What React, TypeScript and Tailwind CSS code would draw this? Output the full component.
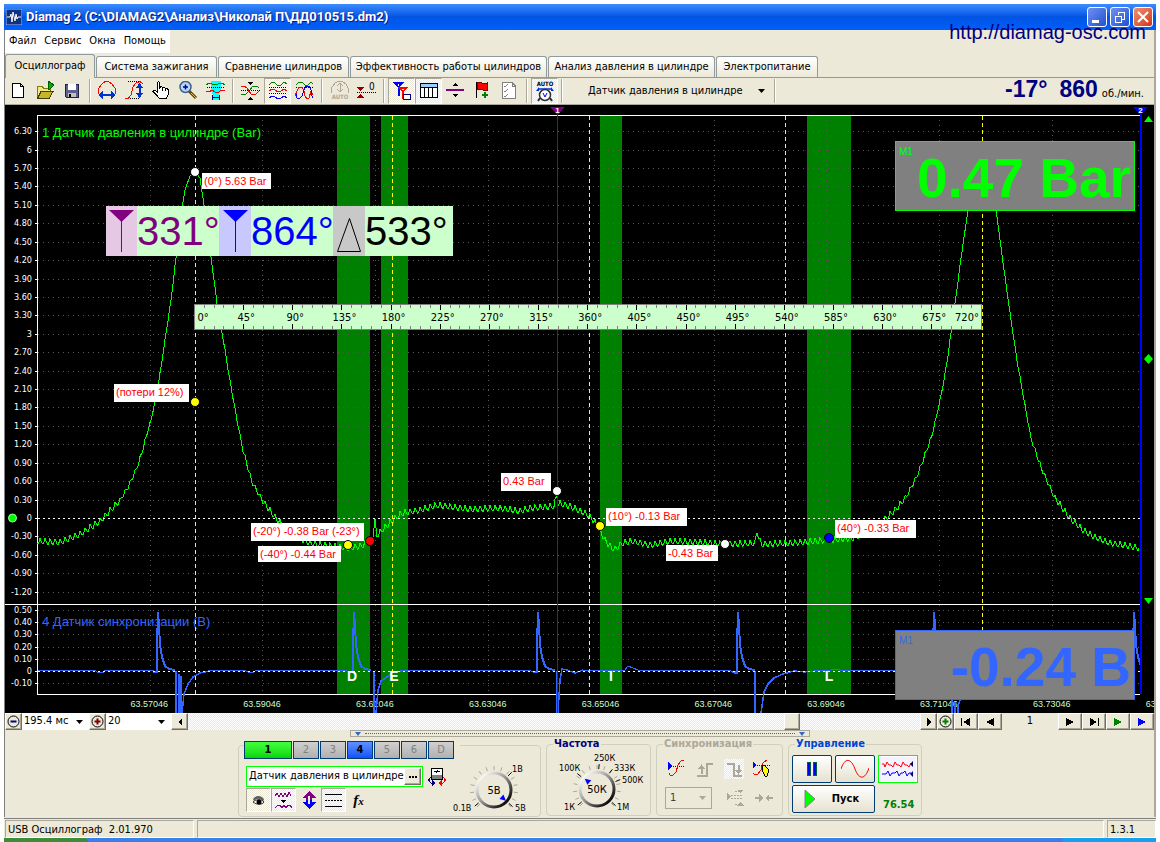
import type { ReactNode } from "react"

// ---------- small shared pieces ----------

const checker = "bg-[conic-gradient(#fff_25%,#ece9d8_0_50%,#fff_0_75%,#ece9d8_0)] bg-[length:2px_2px]"
const raised = "border border-t-white border-l-white border-r-[#716f64] border-b-[#716f64] bg-[#ece9d8] shadow-[inset_-1px_-1px_#aca899]"

function Icon({ children, size = 20 }: { children: ReactNode; size?: number }) {
  return (
    <svg width={size} height={size} viewBox={`0 0 ${size} ${size}`} fill="none" shapeRendering="crispEdges" aria-hidden="true" className="shrink-0">
      {children}
    </svg>
  )
}

function ToolButton({ label, pressed, children }: { label: string; pressed?: boolean; children: ReactNode }) {
  return (
    <button
      aria-label={label}
      className={`flex h-[26px] w-[27px] items-center justify-center border ${
        pressed ? `${checker} border-t-[#aca899] border-l-[#aca899] border-r-white border-b-white` : "border-transparent"
      }`}
    >
      {children}
    </button>
  )
}

function Sep() {
  return (
    <div className="flex w-2 justify-center self-stretch py-px">
      <div className="w-[2px] border-l border-[#aca899] bg-white"></div>
    </div>
  )
}

function Arrow() {
  return (
    <svg width="7" height="4" viewBox="0 0 7 4" aria-hidden="true" className="pointer-events-none absolute right-1.5 top-1/2 -mt-[2px]">
      <path d="M0 0H7L3.5 4Z" fill="currentColor" />
    </svg>
  )
}

// ---------- chart data ----------

const pressure: [number, number][] = [
  [37, 541], [60, 542], [80, 534], [100, 521], [120, 500], [128, 487], [134, 474], [139, 462], [145, 441], [151, 420],
  [158, 387], [165, 340], [171, 300], [176, 258], [181, 215], [185, 190], [190, 176], [195, 172], [200, 178], [204, 205],
  [211, 257], [217, 303], [222, 332], [229, 375], [237, 420], [243, 450], [252, 482], [263, 501], [275, 517], [282, 524],
  [296, 536], [310, 543], [348, 548], [360, 546], [370, 541], [373, 534], [375, 522], [377, 535], [386, 526], [395, 518],
  [402, 513], [420, 510], [437, 505], [470, 509], [500, 508], [520, 511], [530, 508], [554, 506], [556, 498], [557, 491],
  [558, 503], [570, 506], [585, 513], [592, 518], [600, 530], [605, 540], [612, 548], [615, 549], [622, 543], [632, 541],
  [650, 545], [670, 541], [700, 542], [725, 544], [755, 543], [757, 531], [760, 541], [762, 544], [790, 543], [828, 540],
  [852, 538], [870, 531], [886, 518], [898, 507], [907, 495], [917, 476], [923, 460], [932, 435], [936, 418], [940, 400],
  [944, 380], [948, 355], [955, 304], [961, 258], [968, 210], [976, 178], [982, 170], [989, 178], [996, 210], [1003, 262],
  [1010, 313], [1017, 360], [1024, 400], [1031, 438], [1041, 467], [1054, 496], [1069, 517], [1082, 529], [1095, 537],
  [1110, 543], [1125, 545], [1140, 548],
]

// base line of the trace with the sawtooth ripple laid on the slow parts
function pressurePath() {
  const out: string[] = []
  for (let i = 0; i < pressure.length - 1; i++) {
    const [x0, y0] = pressure[i]
    const [x1, y1] = pressure[i + 1]
    for (let x = x0; x < x1; x++) {
      const y = y0 + ((y1 - y0) * (x - x0)) / (x1 - x0)
      const amp = y > 500 ? 3 : y > 440 ? 2 : y > 250 ? 1 : 0
      const tooth = [-1, -0.2, 0.6, 1, 0.2][x % 5] * amp
      out.push(`${x} ${(y + tooth).toFixed(1)}`)
    }
  }
  return "M" + out.join("L")
}

const spikes = [157, 353, 537, 737, 933, 1133]

function spikePath(x: number) {
  return `M${x - 4} 672H${x}V645L${x + 1} 612L${x + 2} 625L${x + 3} 645L${x + 5} 657L${x + 8} 666L${x + 12} 669L${x + 18} 670`
}

const dips = [
  "M176 671V713M179 713V675H180M181 713V676M182 713L184 694L188 684L193 677L200 673L209 671",
  "M374 671V713M376 713L378 690L381 681L387 677L394 672L402 671",
  "M557 671V713M558 713L560 680L562 669L567 670L575 673L583 670",
  "M755 671V713M761 713L764 692L768 684L774 678L783 674L794 671L806 672",
  "M952 700V713M955 713V702M958 713V706L960 700",
]

const yTop = Array.from({ length: 26 }, (_, i) => 6.3 - i * 0.3)
const yLow = [0.5, 0.4, 0.3, 0.2, 0.1, 0, -0.1]
const xTicks = Array.from({ length: 10 }, (_, i) => ({ x: 150.5 + i * 112.8, t: (63.57046 + i * 0.02).toFixed(5) }))
const bands = [[337, 33], [381, 27], [600, 22], [807, 44]]

const notes = [
  { x: 202, y: 173, w: 69, h: 16, t: "(0°) 5.63 Bar" },
  { x: 114, y: 384, w: 75, h: 18, t: "(потери 12%)" },
  { x: 251, y: 523, w: 113, h: 18, t: "(-20°) -0.38 Bar (-23°)" },
  { x: 258, y: 546, w: 83, h: 16, t: "(-40°) -0.44 Bar" },
  { x: 501, y: 473, w: 50, h: 18, t: "0.43 Bar" },
  { x: 606, y: 508, w: 81, h: 18, t: "(10°) -0.13 Bar" },
  { x: 666, y: 545, w: 52, h: 16, t: "-0.43 Bar" },
  { x: 835, y: 520, w: 81, h: 18, t: "(40°) -0.33 Bar" },
]

const dots = [
  [195, 172, "#fff"], [195, 402, "#ff0"], [348, 545, "#ff0"], [370, 541, "#f00"], [557, 491, "#fff"],
  [600, 526, "#ff0"], [725, 544, "#fff"], [829, 538, "#00f"],
] as [number, number, string][]

function fmt(v: number) {
  const r = Math.round(v * 100) / 100
  return Math.abs(r % 3) < 0.001 ? String(Math.abs(r)) : r.toFixed(2)
}

function Chart() {
  return (
    <svg viewBox="5 105 1149 608" className="block h-auto w-full bg-black font-['Liberation_Sans',sans-serif]" role="img" aria-label="Осциллограмма">
      <defs>
        <clipPath id="plot">
          <rect x="37" y="115" width="1103" height="598" />
        </clipPath>
      </defs>

      {/* green phase bands */}
      {bands.map(([x, w]) => (
        <rect key={x} x={x} y="116" width={w} height="578" fill="#008000" />
      ))}

      {/* dotted grid */}
      <g stroke="#585858" strokeDasharray="1 4" shapeRendering="crispEdges">
        {yTop.map((v) => (
          <path key={v} d={`M38 ${Math.round(518 - v * 61.4) + 0.5}H1140`} />
        ))}
        {yLow.map((v) => (
          <path key={v} d={`M38 ${Math.round(671 - v * 122) + 0.5}H1140`} />
        ))}
        {xTicks.slice(0, 9).map((k) => (
          <path key={k.t} d={`M${Math.round(k.x) - 0.5} 120V694`} />
        ))}
      </g>

      {/* axis numbers */}
      <g fill="#fff" fontSize="9" textAnchor="end" className="font-['DejaVu_Sans_Condensed','DejaVu_Sans',sans-serif]">
        {yTop.map((v) => (
          <text key={v} x="32" y={Math.round(518 - v * 61.4) + 3}>{fmt(v)}</text>
        ))}
        {yLow.map((v) => (
          <text key={v} x="32" y={Math.round(671 - v * 122) + 3}>{fmt(v)}</text>
        ))}
      </g>
      <g stroke="#fff" shapeRendering="crispEdges">
        {yTop.map((v) => (
          <path key={v} d={`M35 ${Math.round(518 - v * 61.4) + 0.5}H38`} />
        ))}
        {yLow.map((v) => (
          <path key={v} d={`M35 ${Math.round(671 - v * 122) + 0.5}H38`} />
        ))}
        <path d="M37.5 115V694.5H1140M37 115.5H1140M5 604.5H1140" fill="none" />
      </g>
      <g fill="#ccffcc" fontSize="9">
        {xTicks.map((k) => (
          <text key={k.t} x={k.x - 20} y="707">{k.t}</text>
        ))}
      </g>

      <g fontSize="13">
        <text x="42" y="137" fill="#00ff00">1 Датчик давления в цилиндре (Bar)</text>
        <text x="42" y="626" fill="#3366ff">4 Датчик синхронизации (В)</text>
      </g>

      {/* traces */}
      <g clipPath="url(#plot)" fill="none" shapeRendering="crispEdges">
        <path d={pressurePath()} stroke="#00ff00" />
        <g stroke="#3366ff">
          <path d="M38 670.5H95l3 2h5l2-2H154M209 670.5H245l4 2h4l3-2H346l4 2h4M402 670.5H530l4 2h4M583 670H625l3-4 5 2 5 2H730l4 3h4M806 672l8-1 5-1h12l3-1 6 1H896" />
          {spikes.map((x) => (
            <path key={x} d={spikePath(x)} strokeWidth="2" />
          ))}
          {dips.map((d) => (
            <path key={d} d={d} strokeWidth="1.5" />
          ))}
        </g>
      </g>
      <path d="M38 518.5H1140M38 671.5H1140" stroke="#fff" strokeDasharray="2 3" shapeRendering="crispEdges" />

      {/* dead-centre markers and cursors */}
      <g stroke="#ffff00" strokeDasharray="4 3" shapeRendering="crispEdges">
        {[195, 392, 589, 785, 982].map((x) => (
          <path key={x} d={`M${x + 0.5} 116V694`} />
        ))}
      </g>
      <path d="M557.5 113V713" stroke="#800080" shapeRendering="crispEdges" />
      <path d="M1140.5 113V694" stroke="#0000ff" strokeWidth="2" shapeRendering="crispEdges" />
      <path d="M550 107H565L557.5 115Z" fill="#800080" />
      <path d="M1133 107H1148L1140.5 115Z" fill="#0000ff" />
      <g fill="#fff" fontSize="8" fontWeight="bold" textAnchor="middle">
        <text x="557.5" y="113">1</text>
        <text x="1140.5" y="113">2</text>
        <g fontSize="14">
          <text x="352" y="681">D</text>
          <text x="394" y="681">E</text>
          <text x="611" y="681">I</text>
          <text x="829" y="681">L</text>
        </g>
      </g>

      {/* level handles */}
      <g fill="#00ff00">
        <circle cx="12.5" cy="518" r="4" stroke="#a0ffa0" />
        <path d="M1148.5 116L1153 122H1144ZM1148.5 354L1153 359L1148.5 364L1144 359ZM1144 598H1153L1148.5 604Z" />
      </g>

      {/* crank angle ruler */}
      <rect x="194.5" y="304.5" width="787" height="25" fill="#ccffcc" stroke="#808080" />
      {Array.from({ length: 79 }, (_, i) => i + 1).map((i) => {
        const x = Math.round(195 + i * 9.83) - 0.5
        const n = i % 5 ? 3 : 5
        return <path key={i} d={`M${x} 305v${n}M${x} 329v${-n}`} stroke={i % 5 ? "#808080" : "#000"} shapeRendering="crispEdges" />
      })}
      <g fill="#000" fontSize="11" textAnchor="middle" className="font-['DejaVu_Sans_Condensed','DejaVu_Sans',sans-serif]">
        {Array.from({ length: 17 }, (_, i) => (
          <text key={i} x={i === 0 ? 203 : i === 16 ? 967 : 197 + i * 49.15} y="321">{i * 45}°</text>
        ))}
      </g>

      {/* notes with their points */}
      {notes.map((n) => (
        <g key={n.t}>
          <rect x={n.x} y={n.y} width={n.w} height={n.h} fill="#fff" />
          <text x={n.x + 2} y={n.y + 12} fill="#ff0000" fontSize="11">{n.t}</text>
        </g>
      ))}
      {dots.map(([x, y, c]) => (
        <circle key={`${x}-${y}`} cx={x} cy={y} r="4.5" fill={c} stroke="#000" />
      ))}
    </svg>
  )
}

// big angle numbers over the chart
function AngleReadout() {
  return (
    <div className="absolute left-[101px] top-[101px] flex h-[50px] bg-[#ccffcc] font-['Liberation_Sans',sans-serif] text-[40px] leading-[50px]">
      <div className="flex w-[31px] items-center bg-[#e4c8e4]">
        <svg width="31" height="50" viewBox="0 0 31 50" aria-hidden="true">
          <path d="M3 4H28L15.5 16Z" fill="#800080" />
          <path d="M15.5 14V46" stroke="#800080" />
        </svg>
      </div>
      <div className="w-[82px] text-[#800080]">331°</div>
      <div className="flex w-8 items-center bg-[#c8c8ff]">
        <svg width="32" height="50" viewBox="0 0 32 50" aria-hidden="true">
          <path d="M4 4H29L16.5 16Z" fill="#0000ff" />
          <path d="M16.5 14V46" stroke="#0000ff" />
        </svg>
      </div>
      <div className="w-[82px] text-[#0000ff]">864°</div>
      <div className="flex w-8 items-center bg-[#c8c8c8]">
        <svg width="32" height="50" viewBox="0 0 32 50" fill="none" aria-hidden="true">
          <path d="M16.5 12.5L4.5 45.5H27.5Z" stroke="#000" />
        </svg>
      </div>
      <div className="w-[88px] text-black">533°</div>
    </div>
  )
}

function Toolbar() {
  return (
    <div className="flex h-7 items-center border-t border-b border-t-[#919b9c] border-b-[#aca899]">
      <ToolButton label="Новый">
        <Icon><path d="M3.5 2.5H11.5L14.5 5.5V16.5H3.5ZM11.5 2.5V5.5H14.5" fill="#fff" stroke="#000" /></Icon>
      </ToolButton>
      <ToolButton label="Открыть">
        <Icon>
          <path d="M1.5 17.5V5.5H6L8 7.5H14.5V10" fill="#f0e68c" stroke="#808000" />
          <path d="M1.5 17.5L5 10.5H17L13 17.5Z" fill="#c8b428" stroke="#404000" />
          <path d="M12 0L18 4L13 9Z" fill="#00b000" stroke="#006000" />
        </Icon>
      </ToolButton>
      <ToolButton label="Сохранить">
        <Icon>
          <path d="M2 3H15V16H3L2 15Z" fill="#606090" stroke="#202040" />
          <path d="M5 3H13V9H5Z" fill="#fff" />
          <path d="M5 12H13V16H5Z" fill="#c0c0c0" />
          <path d="M6 13H8V16H6Z" fill="#000" />
        </Icon>
      </ToolButton>
      <Sep />
      <ToolButton label="Период">
        <Icon>
          <path d="M.5 13V8L3 4L7 .5H10L14 3L17.5 8V13" stroke="#f00" />
          <path d="M2 14H16" stroke="#0033cc" strokeWidth="2" />
          <path d="M5 10L0 14L5 18ZM13 10L18 14L13 18Z" fill="#0033cc" />
        </Icon>
      </ToolButton>
      <ToolButton label="Амплитуда">
        <Icon>
          <path d="M3 .5H16M3 17.5H14" stroke="#000" strokeDasharray="1 1" />
          <path d="M0 17.5H3L6 14L8 6L11 2L15 .5L18 3" stroke="#f00" />
          <path d="M14.5 4V14" stroke="#0033cc" strokeWidth="2" />
          <path d="M11 7L14.5 2L18 7ZM11 12L14.5 17L18 12Z" fill="#0033cc" />
        </Icon>
      </ToolButton>
      <ToolButton label="Перемещение">
        <Icon>
          <path d="M5.5 10V1.5L6.5 .5L7.5 1.5V7L9 5.5L10.5 6.5L12 6L13.5 7.5L15 7L16.5 9V13L14.5 17.5H7.5L4 13.5L1 10.5L2 9L5.5 11Z" fill="#fff" stroke="#000" />
          <path d="M10.5 7V10M13.5 8V10" stroke="#000" />
        </Icon>
      </ToolButton>
      <ToolButton label="Масштаб">
        <svg width="20" height="20" viewBox="0 0 20 20" fill="none" aria-hidden="true">
          <path d="M10 10L17 17" stroke="#604800" strokeWidth="3" />
          <path d="M12 12L17 17" stroke="#e0b060" />
          <circle cx="6.5" cy="6" r="5.5" fill="#b8d8ff" stroke="#406090" strokeWidth="1.5" />
          <path d="M4 6H9M6.5 3.5V8.5" stroke="#000080" strokeWidth="1.5" />
        </svg>
      </ToolButton>
      <ToolButton label="Фрагмент">
        <Icon>
          <path d="M5 0H15V10L13 14V19H7V14L5 10Z" fill="#00ffff" />
          <path d="M0 4L3 2L6 3L9 4L12 3L16 2L19 4" stroke="#008000" />
          <path d="M1 6.5H19" stroke="#000" strokeDasharray="1 1" />
          <path d="M0 10L3 11L6 9L9 11L12 12L15 9L19 10" stroke="#f00" />
          <path d="M6 16.5H14M6.5 14V19M13.5 14V19" stroke="#000080" />
        </Icon>
      </ToolButton>
      <Sep />
      <ToolButton label="Совместить">
        <Icon>
          <path d="M0 6L3 5L6 7L10 13L14 14L18 10" stroke="#f00" />
          <path d="M0 13L4 14L8 10L12 5L16 5L18 7" stroke="#008000" />
          <path d="M0 9.5H19" stroke="#000" strokeDasharray="1 1" />
          <path d="M7 1H12L9.5 4ZM7 19H12L9.5 16Z" fill="#000" />
        </Icon>
      </ToolButton>
      <ToolButton label="Разделить" pressed>
        <Icon>
          <path d="M1 4L4 1L7 2L10 5L13 4L16 1L19 3" stroke="#008000" />
          <path d="M1 6.5H19M1 12.5H19" stroke="#000" strokeDasharray="1 1" />
          <path d="M1 10L4 8L7 9L10 11L13 10L16 8L19 10" stroke="#f00" />
          <path d="M1 17L4 15L7 16L10 18L13 17L16 15L19 17" stroke="#00f" />
        </Icon>
      </ToolButton>
      <ToolButton label="Наложить">
        <Icon>
          <path d="M1 4L4 1L7 1L10 4L13 4L16 1L18 3" stroke="#008000" />
          <path d="M1 6.5H19" stroke="#000" strokeDasharray="1 1" />
          <path d="M0 15L2 10L4 6H7L9 10L10 15L12 18L14 17L16 10L18 14" stroke="#f00" />
          <path d="M1 13L2 17L4 18L7 15L9 9L11 5L14 5L16 9L17 15L18 17" stroke="#00f" />
        </Icon>
      </ToolButton>
      <Sep />
      <ToolButton label="Авто">
        <Icon>
          <path d="M1.5 12V7L5 2L8 .5H12L16 3L18.5 8V12M10 2V11M7 5L10 2L13 5M7 8L10 11L13 8" stroke="#aca899" />
          <text x="10" y="18" textAnchor="middle" fontSize="6" fontWeight="bold" fill="#aca899">AUTO</text>
        </Icon>
      </ToolButton>
      <ToolButton label="Ноль">
        <Icon>
          <path d="M0 6H7L3.5 10ZM0 17H7L3.5 13Z" fill="#900000" />
          <path d="M0 11.5H19" stroke="#000" strokeDasharray="1 1" />
          <text x="12" y="9" fontSize="10" fill="#000">0</text>
        </Icon>
      </ToolButton>
      <Sep />
      <ToolButton label="Линейки" pressed>
        <Icon>
          <path d="M0 1H12L8 6V15H6V7Z" fill="#0000ff" />
          <path d="M5 6H16L12 11V18H10V11Z" fill="#ff0000" />
          <path d="M6 3V5M10 8H12" stroke="#fff" />
          <path d="M11.5 13.5H18.5V18.5H11.5Z" fill="#fff" stroke="#000080" />
        </Icon>
      </ToolButton>
      <ToolButton label="Таблица" pressed>
        <Icon>
          <path d="M1.5 2.5H18.5V16.5H1.5Z" fill="#fff" stroke="#000" />
          <path d="M2 3H18V6H2Z" fill="#99ccff" />
          <path d="M2 6.5H18M5.5 6V16M9.5 6V16M13.5 6V16" stroke="#000" />
        </Icon>
      </ToolButton>
      <ToolButton label="Разделитель">
        <Icon>
          <path d="M0 9H18" stroke="#800080" strokeWidth="2" />
          <path d="M6 5H12L9 2ZM6 13H12L9 16Z" fill="#000" />
        </Icon>
      </ToolButton>
      <ToolButton label="Добавить метку">
        <Icon>
          <path d="M3.5 1V17" stroke="#000" />
          <path d="M4 2L7 1L11 3L14 2V9L10 9L7 8L4 9Z" fill="#f00" stroke="#800000" />
          <path d="M12 11V17M9 14H15" stroke="#008000" strokeWidth="2" />
        </Icon>
      </ToolButton>
      <ToolButton label="Отчёт">
        <Icon>
          <path d="M2.5 1.5H12L15.5 5V17.5H2.5Z" fill="#fff" stroke="#808080" />
          <path d="M12 1.5V5H15.5M4 5L5 6L8 3M4 10L5 11L8 8M4 15L5 16L8 13" stroke="#808080" />
        </Icon>
      </ToolButton>
      <Sep />
      <ToolButton label="Автовольтметр" pressed>
        <svg width="20" height="22" viewBox="0 0 20 22" fill="none" aria-hidden="true">
          <text x="10" y="6" textAnchor="middle" fontSize="6" fontWeight="bold" fill="#000">AUTO</text>
          <path d="M3 9H17" stroke="#0033cc" strokeWidth="1.5" />
          <path d="M1 11L4 7V11ZM19 11L16 7V11Z" fill="#0033cc" />
          <path d="M5 18L3 21M15 18L17 21" stroke="#303030" strokeWidth="2" />
          <circle cx="10" cy="15" r="5.5" fill="#fff" stroke="#303030" strokeWidth="1.5" />
          <path d="M8 13L10 17L12 13" stroke="#0000ff" />
        </svg>
      </ToolButton>
      <Sep />
      <div className="relative w-[205px]">
        <select aria-label="Канал" className="h-6 w-full appearance-none bg-transparent pl-[22px] outline-none">
          <option>Датчик давления в цилиндре</option>
        </select>
        <Arrow />
      </div>
      <Sep />
      {/* angle and rpm on the right */}
      <div className="ml-auto flex items-baseline gap-3 pr-2.5 font-['Liberation_Sans',sans-serif] text-[23px] font-bold leading-6 text-[#000080]">
        <span>-17°</span>
        <span>
          860<span className="ml-1 font-['DejaVu_Sans_Condensed','DejaVu_Sans',sans-serif] text-[11px] font-normal text-black">об./мин.</span>
        </span>
      </div>
    </div>
  )
}

const tabs = [
  { t: "Система зажигания", w: "w-[121px]" },
  { t: "Сравнение цилиндров", w: "w-[131px]" },
  { t: "Эффективность работы цилиндров", w: "w-[197px]" },
  { t: "Анализ давления в цилиндре", w: "w-[167px]" },
  { t: "Электропитание", w: "w-[102px]" },
]

function MiniButton({ label, wide, children }: { label: string; wide?: boolean; children: ReactNode }) {
  return (
    <button aria-label={label} className={`flex h-[17px] items-center justify-center ${raised} ${wide ? "w-6" : "w-[17px]"}`}>
      {children}
    </button>
  )
}

function ScrollRow() {
  return (
    <div className="flex h-[17px] items-center">
      <MiniButton label="Уменьшить">
        <svg width="13" height="13" viewBox="0 0 13 13" fill="none" className="shrink-0" aria-hidden="true">
          <circle cx="6.5" cy="6.5" r="5.5" stroke="#000" />
          <path d="M3.5 6.5H9.5" stroke="#000080" strokeWidth="2" />
        </svg>
      </MiniButton>
      <div className="relative w-[67px] bg-white">
        <select aria-label="Развёртка" className="block h-[17px] w-full appearance-none pl-0.5 outline-none"><option>195.4 мс</option></select>
        <Arrow />
      </div>
      <MiniButton label="Увеличить">
        <svg width="13" height="13" viewBox="0 0 13 13" fill="none" className="shrink-0" aria-hidden="true">
          <circle cx="6.5" cy="6.5" r="5.5" stroke="#000" />
          <path d="M3.5 6.5H9.5M6.5 3.5V9.5" stroke="#800000" strokeWidth="2" />
        </svg>
      </MiniButton>
      <div className="relative w-[65px] bg-white">
        <select aria-label="Делений" className="block h-[17px] w-full appearance-none pl-0.5 outline-none"><option>20</option></select>
        <Arrow />
      </div>
      <MiniButton label="Влево"><Icon size={8}><path d="M6 0V8L2 4Z" fill="#000" /></Icon></MiniButton>
      <div className={`flex h-[17px] flex-1 ${checker}`}>
        <div className="w-5/6"></div>
        <div className={`-ml-3.5 h-[17px] w-4 ${raised}`}></div>
      </div>
      <MiniButton label="Вправо"><Icon size={8}><path d="M2 0V8L6 4Z" fill="#000" /></Icon></MiniButton>
      <MiniButton label="Добавить страницу">
        <svg width="13" height="13" viewBox="0 0 13 13" fill="none" className="shrink-0" aria-hidden="true">
          <circle cx="6.5" cy="6.5" r="5.5" stroke="#000" />
          <path d="M3.5 6.5H9.5M6.5 3.5V9.5" stroke="#008000" strokeWidth="2" />
        </svg>
      </MiniButton>
      <MiniButton label="В начало" wide><Icon size={12}><path d="M1 2H2V10H1ZM3 6L10 2V10Z" fill="#000" /></Icon></MiniButton>
      <MiniButton label="Назад" wide><Icon size={12}><path d="M2 6L10 2V10Z" fill="#000" /></Icon></MiniButton>
      <div className="w-14 text-center">1</div>
      <MiniButton label="Вперёд" wide><Icon size={12}><path d="M10 6L2 2V10Z" fill="#000" /></Icon></MiniButton>
      <MiniButton label="В конец" wide><Icon size={12}><path d="M10 2H11V10H10ZM9 6L2 2V10Z" fill="#000" /></Icon></MiniButton>
      <MiniButton label="Воспроизвести" wide><Icon size={12}><path d="M10 6L2 2V10Z" fill="#008000" /></Icon></MiniButton>
      <MiniButton label="До конца" wide><Icon size={12}><path d="M10 6L2 2V10Z" fill="#0000ff" /></Icon></MiniButton>
    </div>
  )
}

// rotary knob: ticks round the rim, the blue pointer at the given angle
function Knob({ value, angle, marks }: { value: string; angle: number; marks: { a: number; t: string; x: number; y: number }[] }) {
  const ticks = Array.from({ length: 15 }, (_, i) => 135 + (i * 270) / 14)
  const at = (a: number, r: number) => `${(50 + r * Math.cos((a * Math.PI) / 180)).toFixed(1)} ${(44 + r * Math.sin((a * Math.PI) / 180)).toFixed(1)}`
  return (
    <svg width="100" height="70" viewBox="0 0 100 70" className="shrink-0" role="img" aria-label={value}>
      <defs>
        <linearGradient id={`rim${value}`} x1="0.1" y1="0.1" x2="0.9" y2="0.9">
          <stop offset="0" stopColor="#fff" />
          <stop offset="0.5" stopColor="#909090" />
          <stop offset="1" stopColor="#000" />
        </linearGradient>
      </defs>
      {ticks.map((a) => (
        <path key={a} d={`M${at(a, 20)}L${at(a, 24)}`} stroke="#aca899" />
      ))}
      {marks.map((m) => (
        <path key={m.t} d={`M${at(m.a, 20)}L${at(m.a, 25)}`} stroke="#000" />
      ))}
      <circle cx="50" cy="44" r="17" fill="#ece9d8" stroke={`url(#rim${value})`} strokeWidth="3" />
      <path d="M16 0L10 -3V3Z" fill="#0000ff" transform={`translate(50 44) rotate(${angle})`} />
      <text x="50" y="48" fontSize="11" textAnchor="middle">{value}</text>
      {marks.map((m) => (
        <text key={m.t} x={m.x} y={m.y} fontSize="9">{m.t}</text>
      ))}
    </svg>
  )
}

const groupBox = "rounded-[4px] border border-[#d0d0bf]"
const xpButton = "flex h-7 items-center justify-center rounded-[2px] border border-[#003c74] bg-linear-to-b from-white to-[#e6e2d0]"

function ChannelGroup() {
  return (
    <div className={`mt-2 flex h-[72px] w-[303px] ${groupBox}`}>
      <div className="pl-[5px]">
        <div className="-mt-[5px] flex gap-px bg-[#ece9d8] pr-1.5">
          <button className="h-[18px] w-12 border border-[#003c74] bg-linear-to-b from-[#40ff40] to-[#00d800] font-bold leading-4">1</button>
          {["2", "3", "4", "5", "6", "D"].map((c) => (
            <button
              key={c}
              className={`h-[18px] w-[26px] border border-[#003c74] leading-4 ${
                c === "4" ? "bg-linear-to-b from-[#6090ff] to-[#1050ff] font-bold text-black" : "bg-linear-to-b from-[#d0d0d0] to-[#b0b0b0] text-[#808080]"
              }`}
            >
              {c}
            </button>
          ))}
        </div>
        <div className="mt-[7px] flex items-center gap-1 pl-0.5">
          <div className="flex h-[21px] w-[177px] items-center border border-[#00ff00] bg-white pr-px">
            <input aria-label="Имя канала" defaultValue="Датчик давления в цилиндре" className="h-4 w-full min-w-0 bg-transparent pl-0.5 outline-none" />
            <button aria-label="Выбрать" className={`flex h-[17px] w-[17px] shrink-0 items-center justify-center ${raised}`}>
              <Icon size={8}><path d="M0 3H2V5H0ZM3 3H5V5H3ZM6 3H8V5H6Z" fill="#000" /></Icon>
            </button>
          </div>
          <button aria-label="Датчик">
            <svg width="20" height="20" viewBox="0 0 20 20" fill="none" shapeRendering="crispEdges" aria-hidden="true">
              <path d="M4.5 1.5H15.5V12.5H4.5Z" fill="#fff" stroke="#000" />
              <path d="M5 8H15V12H5Z" fill="#808080" />
              <path d="M7 5L8 4H12L13 5M9 6L11 3" stroke="#000" />
              <path d="M4 10L1.5 13L4 16H6" stroke="#000080" />
              <path d="M5 13L9 16L5 19Z" fill="#000080" />
              <path d="M16 10L18.5 13L16 16H14" stroke="#f00" />
              <path d="M15 13L11 16L15 19Z" fill="#f00" />
            </svg>
          </button>
        </div>
        <div className="mt-px flex pl-0.5">
          <button aria-label="Видимость" className={`flex h-6 w-[25px] items-center justify-center border border-t-[#aca899] border-l-[#aca899] border-r-white border-b-white ${checker}`}>
            <svg width="16" height="14" viewBox="0 0 16 14" fill="none" aria-hidden="true">
              <path d="M2 6C5 2 10 2 13 6L12 9C10 5 6 5 3 8Z" fill="#606060" />
              <path d="M2 9C5 6 11 6 13 9C11 12 6 12 2 9Z" fill="#fff" stroke="#303030" />
              <circle cx="8" cy="9" r="2.5" fill="#000" />
            </svg>
          </button>
          <button aria-label="Фильтр" className={`flex h-6 w-[25px] items-center justify-center border border-t-[#aca899] border-l-[#aca899] border-r-white border-b-white ${checker}`}>
            <Icon>
              <path d="M1 6L3 3L5 7L7 3L9 7L11 3L13 7L15 2L17 6" stroke="#800080" />
              <path d="M7 10H12L9.5 13Z" fill="#000" />
              <path d="M1 18L4 15L6 15L8 18L10 15L12 18L14 15L16 15L18 18" stroke="#800080" />
            </Icon>
          </button>
          <button aria-label="Смещение" className="flex h-6 w-[25px] items-center justify-center">
            <Icon>
              <path d="M10 1L17 8H13V10H7V8H3Z" fill="#800080" />
              <path d="M10 19L17 12H13V10H7V12H3Z" fill="#0000ff" />
              <path d="M9 6H11V14H9Z" fill="#ece9d8" />
            </Icon>
          </button>
          <button aria-label="Уровни" className={`flex h-6 w-[25px] items-center justify-center border border-t-[#aca899] border-l-[#aca899] border-r-white border-b-white ${checker}`}>
            <Icon>
              <path d="M1 4.5H18M1 16.5H18" stroke="#000" />
              <path d="M1 10.5H18" stroke="#000" strokeDasharray="2 1" />
            </Icon>
          </button>
          <button aria-label="Функция" className="h-6 w-[25px] font-['Liberation_Serif',serif] text-[15px] font-bold italic leading-6">
            f<span className="text-[11px]">x</span>
          </button>
        </div>
      </div>
      <div className="-ml-4">
        <Knob
          value="5В"
          angle={42}
          marks={[
            { a: 140, t: "0.1В", x: 9, y: 65 },
            { a: -45, t: "1В", x: 68, y: 26 },
            { a: 42, t: "5В", x: 71, y: 65 },
          ]}
        />
      </div>
    </div>
  )
}

function Controls() {
  return (
    <div className="flex justify-center gap-[5px] pl-px">
      <ChannelGroup />

      <fieldset className={`h-[79px] w-[105px] ${groupBox}`}>
        <legend className="ml-1.5 px-px font-bold leading-[14px] text-[#000080]">Частота</legend>
        <div className="-mt-1.5 flex">
          <Knob
            value="50К"
            angle={220}
            marks={[
              { a: 140, t: "1К", x: 17, y: 65 },
              { a: 218, t: "100К", x: 12, y: 26 },
              { a: -85, t: "250К", x: 47, y: 16 },
              { a: -52, t: "333К", x: 67, y: 26 },
              { a: -22, t: "500К", x: 75, y: 38 },
              { a: 42, t: "1М", x: 70, y: 65 },
            ]}
          />
        </div>
      </fieldset>

      <fieldset className={`h-[79px] w-[125px] ${groupBox}`} disabled>
        <legend className="ml-1.5 px-px font-bold leading-[14px] text-[#aca899]">Синхронизация</legend>
        <div className="flex items-center justify-between px-2.5 pt-2">
          <button aria-label="Уровень">
            <Icon><path d="M1 3V11L6 7Z" fill="#00f" /><path d="M6 7.5H17" stroke="#00f" strokeDasharray="1 1" /><path d="M2 14L3 16H6L9 13L11 6L14 2L17 1" stroke="#f00" /></Icon>
          </button>
          <button aria-label="По фронту">
            <Icon><path d="M2 16.5H11.5V4.5H18M6.5 15V7M4 10L6.5 7L9 10" stroke="#aca899" strokeWidth="2" /></Icon>
          </button>
          <button aria-label="По спаду" className={checker}>
            <Icon><path d="M3 4.5H9.5V16.5H18M14.5 6V14M12 11L14.5 14L17 11" stroke="#aca899" strokeWidth="2" /></Icon>
          </button>
          <button aria-label="Вручную">
            <Icon><path d="M1 3V9L5 6Z" fill="#00f" /><path d="M5 6.5H19" stroke="#00f" strokeDasharray="1 1" /><path d="M1 14L3 16L6 15L9 11L11 4L15 1" stroke="#f00" /><path d="M10.5 6.5L12 6L16 10V14L15 17H13L10.5 12Z" fill="#ff0" stroke="#000" /></Icon>
          </button>
        </div>
        <div className="flex items-center gap-3.5 px-2 pt-2">
          <div className="relative w-[47px] text-[#404040]">
            <select aria-label="Канал синхронизации" className="block h-[22px] w-full appearance-none border border-[#aca899] pl-1 opacity-100 outline-none"><option>1</option></select>
            <span className="text-[#aca899]"><Arrow /></span>
          </div>
          <div className="flex gap-2">
            <Icon><path d="M1 5V12L5 8.5ZM11 2H18L14.5 5ZM11 18H18L14.5 14Z" fill="#aca899" /><path d="M5 7.5H17M5 10.5H17M9 3.5H13M9 16.5H13" stroke="#aca899" strokeDasharray="2 1" /></Icon>
            <Icon><path d="M1 10H6M14 10H19" stroke="#aca899" strokeWidth="2" /><path d="M5 6L9 10L5 14ZM15 6L11 10L15 14Z" fill="#aca899" /></Icon>
          </div>
        </div>
      </fieldset>

      <fieldset className={`h-[79px] w-[133px] ${groupBox}`}>
        <legend className="ml-1.5 px-px font-bold leading-[14px] text-[#0046d5]">Управление</legend>
        <div className="flex gap-[3px] px-[3px] pt-1">
          <button aria-label="Пауза" className={`w-10 ${xpButton}`}>
            <Icon><path d="M5.5 3.5H8.5V16.5H5.5ZM11.5 3.5H14.5V16.5H11.5Z" fill="#00f" stroke="#006040" /></Icon>
          </button>
          <button aria-label="Один кадр" className={`w-10 ${xpButton}`}>
            <svg width="28" height="20" viewBox="0 0 28 20" fill="none" aria-hidden="true">
              <path d="M0 10C4 -2 10 -1 14 10S24 21 28 9" stroke="#f00" />
            </svg>
          </button>
          <button aria-label="Запись" className="flex h-7 w-10 items-center justify-center border border-[#00ff00] bg-[#f4f2ff] outline-1 -outline-offset-2 outline-white">
            <svg width="34" height="20" viewBox="0 0 34 20" fill="none" aria-hidden="true">
              <path d="M1 5H3L4 8L6 3L8 6H10L12 8L14 3L16 6H18L20 8L22 3L24 6H26L28 8L30 4" stroke="#f00" />
              <path d="M1 15H5L7 12L9 17L11 14H14L16 12L18 17L20 14H22L24 12L26 17L28 14H30" stroke="#00f" />
              <path d="M32 2V8L29 5ZM32 12V18L29 15Z" fill="#000080" />
            </svg>
          </button>
        </div>
        <div className="flex items-center gap-2 px-[3px] pt-0.5">
          <button className={`w-[83px] gap-4 pr-1 font-bold ${xpButton}`}>
            <svg width="12" height="20" viewBox="0 0 12 20" aria-hidden="true"><path d="M1 1L11 10L1 19Z" fill="#00ff00" stroke="#808080" /></svg>
            Пуск
          </button>
          <span className="pt-3 font-bold text-[#008000]">76.54</span>
        </div>
      </fieldset>
    </div>
  )
}

export default function App() {
  return (
    <div className="relative bg-white pt-1 font-['DejaVu_Sans_Condensed','DejaVu_Sans',sans-serif] text-[11px] text-black">
      <div className="mx-1 bg-[#ece9d8]">
        {/* title bar */}
        <div className="flex h-[26px] items-center bg-linear-to-b from-[#3c8cff] via-[#0054e3] to-[#0060fc] pl-0.5 pr-[3px]">
          <svg width="16" height="16" viewBox="0 0 16 16" fill="none" aria-hidden="true">
            <path d="M0 0H16V16H0Z" fill="#103080" stroke="#a0c0f0" />
            <path d="M1 8H4L5 5L6 13L7 3L9 12L10 5L11 10L12 8H15" stroke="#fff" />
          </svg>
          <h1 className="ml-1 font-['Roboto',sans-serif] text-[13px] font-bold text-white [text-shadow:1px_1px_#0a1883]">Diamag 2 (C:\DIAMAG2\Анализ\Николай П\ДД010515.dm2)</h1>
          <div className="ml-auto flex gap-[3px]">
            <button aria-label="Свернуть" className="rounded-[3px] border border-white bg-linear-to-br from-[#7090f0] to-[#2050d0]">
              <Icon size={18}><path d="M4 12H11V15H4Z" fill="#fff" /></Icon>
            </button>
            <button aria-label="Восстановить" className="rounded-[3px] border border-white bg-linear-to-br from-[#7090f0] to-[#2050d0]">
              <Icon size={18}><path d="M4.5 8.5H10.5V14.5H4.5ZM4 8H11M7.5 7V4.5H13.5V11.5H11M7 4H14" stroke="#fff" /></Icon>
            </button>
            <button aria-label="Закрыть" className="rounded-[3px] border border-white bg-linear-to-br from-[#f09070] to-[#d03010]">
              <svg width="18" height="18" viewBox="0 0 18 18" aria-hidden="true"><path d="M4 4L14 14M14 4L4 14" stroke="#fff" strokeWidth="2" /></svg>
            </button>
          </div>
        </div>

        <div className="border-l border-r-2 border-[#808080] border-r-[#aca899]">
          {/* menu */}
          <nav className="flex h-[23px] w-[165px] items-center gap-2 bg-white pl-1">
            <button>Файл</button>
            <button>Сервис</button>
            <button>Окна</button>
            <button>Помощь</button>
          </nav>

          {/* tabs */}
          <div className="flex h-6 items-end gap-px pt-px" role="tablist">
            <button role="tab" aria-selected="true" className="-mb-px h-6 w-[90px] rounded-t-[3px] border border-b-0 border-[#919b9c] bg-[#ece9d8]">Осциллограф</button>
            {tabs.map((t) => (
              <button key={t.t} role="tab" aria-selected="false" className={`h-[21px] rounded-t-[3px] border border-b-0 border-[#919b9c] bg-linear-to-b from-white to-[#ece9d8] whitespace-nowrap ${t.w}`}>
                {t.t}
              </button>
            ))}
          </div>

          <Toolbar />

          {/* chart with its readouts */}
          <div className="relative overflow-hidden">
            <Chart />
            <AngleReadout />
            <div className="absolute right-[19px] top-9 h-[70px] w-60 border border-[#00ff00] bg-[#808080] pr-[3px] text-right font-['Liberation_Sans',sans-serif] text-[55px] font-bold leading-[72px] text-[#00ff00]">
              <span className="absolute left-[3px] top-1 text-[10px] font-normal leading-3">М1</span>
              0.47 Bar
            </div>
            <div className="absolute right-[19px] top-[525px] h-[70px] w-60 border border-[#3366ff] bg-[#808080] pr-[3px] text-right font-['Liberation_Sans',sans-serif] text-[55px] font-bold leading-[72px] text-[#3366ff]">
              <span className="absolute left-[3px] top-1 text-[10px] font-normal leading-3">М1</span>
              -0.24 В
            </div>
          </div>

          <ScrollRow />

          {/* splitter */}
          <div className="mx-auto flex h-[7px] w-[460px] items-center gap-1 border border-[#aca899] px-1 text-[#316ac5]">
            <svg width="6" height="4" aria-hidden="true"><path d="M0 0H6L3 4Z" fill="currentColor" /></svg>
            <div className="h-0 flex-1 border-t border-dotted border-[#316ac5]"></div>
            <svg width="6" height="4" aria-hidden="true"><path d="M0 0H6L3 4Z" fill="currentColor" /></svg>
          </div>

          <Controls />
        </div>

        {/* status bar */}
        <div className="mt-px flex h-5 gap-[3px] border-t border-[#808080] pl-px pt-px leading-[17px]">
          <div className="w-[189px] border border-t-[#aca899] border-l-[#aca899] border-r-white border-b-white pl-0.5 whitespace-pre">USB Осциллограф  2.01.970</div>
          <div className="flex-1 border border-t-[#aca899] border-l-[#aca899] border-r-white border-b-white"></div>
          <div className="w-[49px] border border-t-[#aca899] border-l-[#aca899] border-r-white border-b-white pl-0.5">1.3.1</div>
        </div>

        {/* top edge of the taskbar */}
        <div className="flex h-1 bg-[#3a80e8]">
          <div className="w-[84px] rounded-tr-[4px] bg-[#3c8c3c]"></div>
          <div className="ml-auto w-[93px] bg-[#18a0f0]"></div>
        </div>
      </div>

      <a href="http://diamag-osc.com" className="absolute right-[14px] top-5 font-['Liberation_Sans',sans-serif] text-[20px] leading-6 text-[#000080]">http://diamag-osc.com</a>
    </div>
  )
}
